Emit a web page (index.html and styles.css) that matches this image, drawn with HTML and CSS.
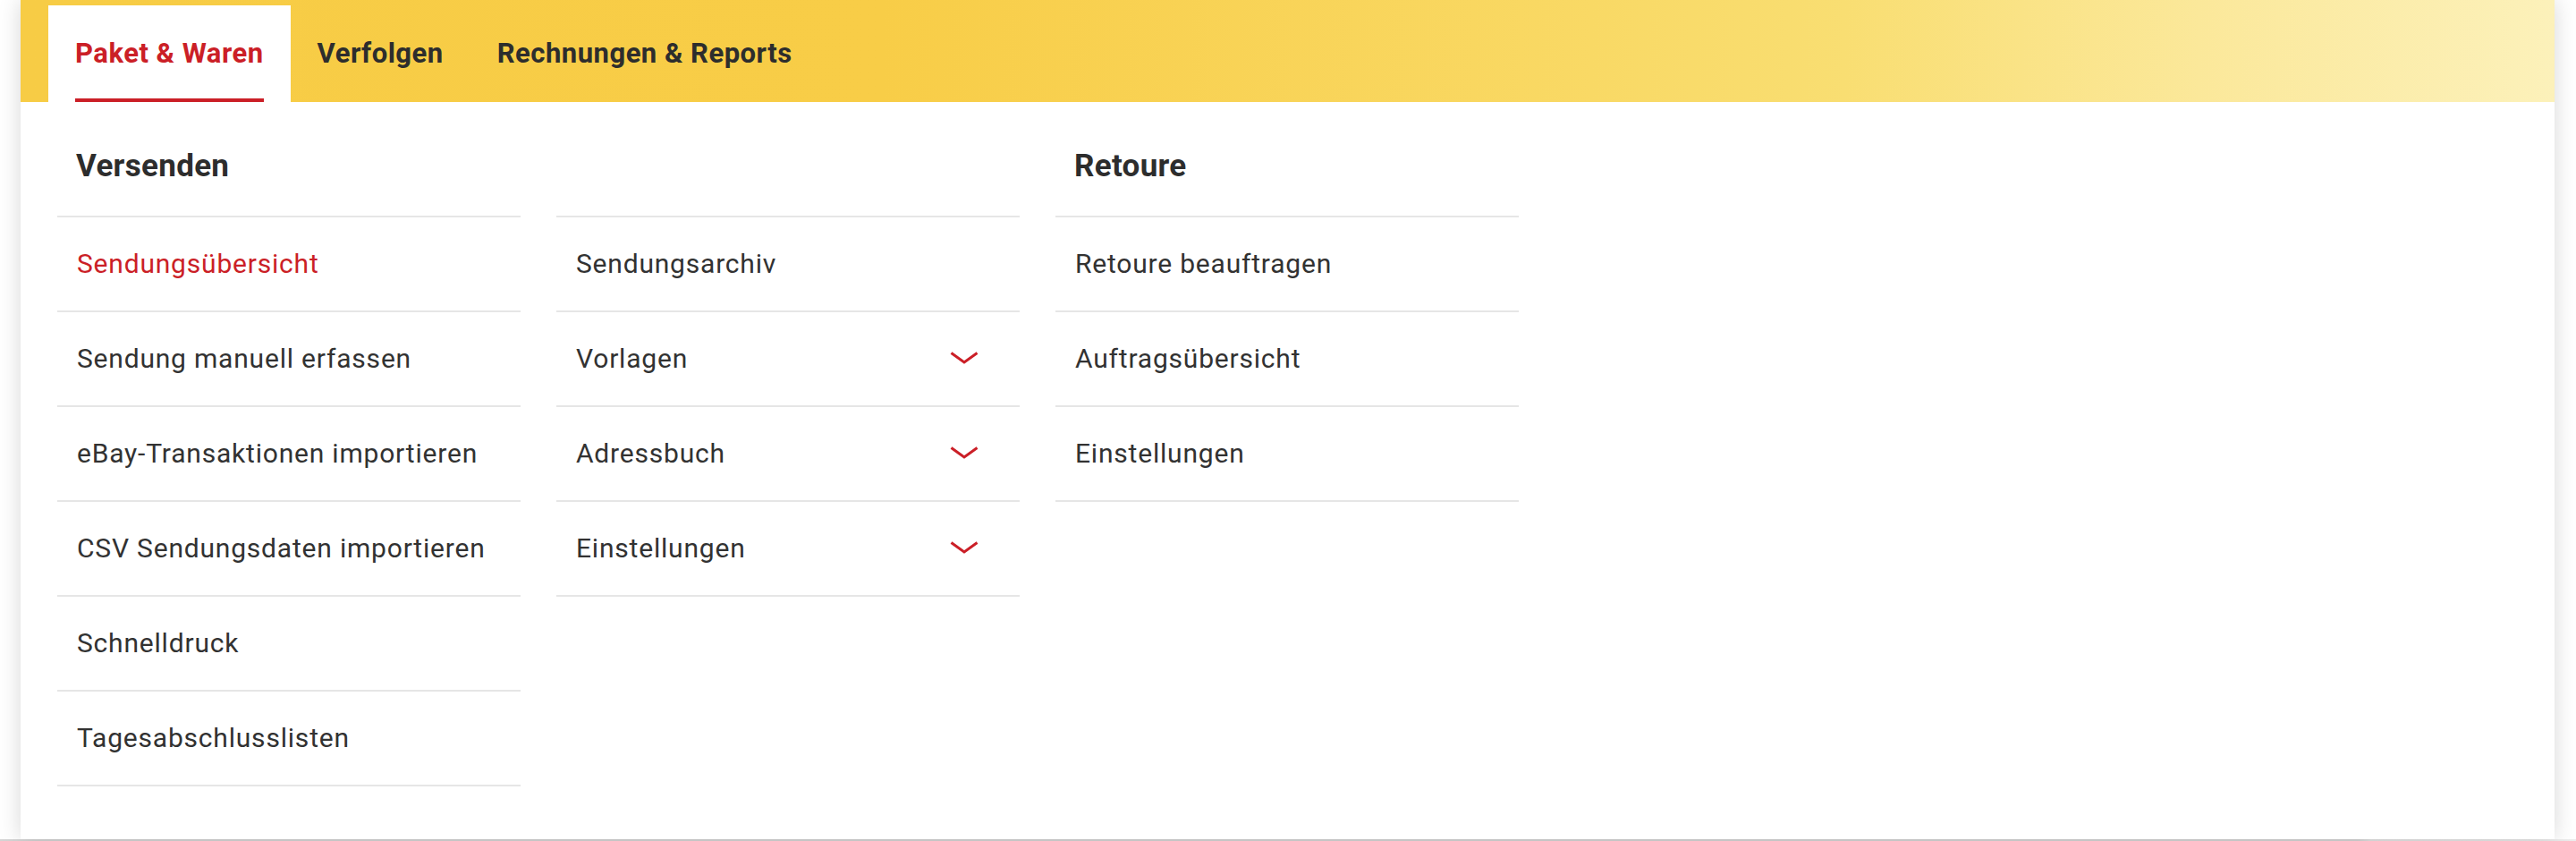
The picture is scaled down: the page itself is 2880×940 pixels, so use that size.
FILE: index.html
```html
<!DOCTYPE html>
<html lang="de">
<head>
<meta charset="utf-8">
<title>Paket &amp; Waren</title>
<link rel="stylesheet" href="styles.css">
</head>
<body>
<div class="page">
  <div class="menu">
    <nav class="tabs">
      <a class="tab active"><span class="tab-label">Paket &amp; Waren</span></a>
      <a class="tab"><span class="tab-label">Verfolgen</span></a>
      <a class="tab"><span class="tab-label">Rechnungen &amp; Reports</span></a>
    </nav>
    <div class="panel">
      <div class="col">
        <h2 class="col-head">Versenden</h2>
        <ul class="list">
          <li class="item current">Sendungsübersicht</li>
          <li class="item">Sendung manuell erfassen</li>
          <li class="item">eBay-Transaktionen importieren</li>
          <li class="item">CSV Sendungsdaten importieren</li>
          <li class="item">Schnelldruck</li>
          <li class="item">Tagesabschlusslisten</li>
        </ul>
      </div>
      <div class="col">
        <h2 class="col-head">&nbsp;</h2>
        <ul class="list">
          <li class="item">Sendungsarchiv</li>
          <li class="item">Vorlagen<svg class="chev" viewBox="0 0 32 14" width="32" height="14"><polyline points="1.5,1.5 16,12 30.5,1.5" fill="none" stroke="#cb1f27" stroke-width="3"/></svg></li>
          <li class="item">Adressbuch<svg class="chev" viewBox="0 0 32 14" width="32" height="14"><polyline points="1.5,1.5 16,12 30.5,1.5" fill="none" stroke="#cb1f27" stroke-width="3"/></svg></li>
          <li class="item">Einstellungen<svg class="chev" viewBox="0 0 32 14" width="32" height="14"><polyline points="1.5,1.5 16,12 30.5,1.5" fill="none" stroke="#cb1f27" stroke-width="3"/></svg></li>
        </ul>
      </div>
      <div class="col">
        <h2 class="col-head">Retoure</h2>
        <ul class="list">
          <li class="item">Retoure beauftragen</li>
          <li class="item">Auftragsübersicht</li>
          <li class="item">Einstellungen</li>
        </ul>
      </div>
    </div>
  </div>
  <div class="backdrop"></div>
</div>
</body>
</html>
```

FILE: styles.css
```css
* { box-sizing: border-box; }
html, body {
  margin: 0;
  padding: 0;
  background: #ffffff;
}
body {
  font-family: Roboto, "Noto Sans", "Liberation Sans", sans-serif;
  color: #323232;
  width: 2880px;
  height: 940px;
  overflow: hidden;
}
.page {
  display: flex;
  flex-direction: column;
  height: 940px;
}
.menu {
  margin: 0 24px 0 23px;
  height: 938px;
  background: #ffffff;
  box-shadow: 0 0 24px rgba(0, 0, 0, 0.16);
  display: flex;
  flex-direction: column;
  position: relative;
  z-index: 1;
}
.backdrop {
  height: 2px;
  background: linear-gradient(90deg, #d4d4d4 0%, #d4d4d4 91.5%, #e2e2e2 92%, #ececec 100%);
}
.tabs {
  height: 114px;
  flex: none;
  display: flex;
  align-items: flex-end;
  padding-left: 31px;
  background: linear-gradient(90deg, #f7cc45 0%, #f8cd47 34%, #f9d965 62%, #f9de72 72%, #fbe89a 86%, #fcf1ba 100%);
}
.tab {
  height: 108px;
  padding: 0 30px;
  display: flex;
  font-size: 31px;
  font-weight: 700;
  color: #2d2d2d;
  text-decoration: none;
  letter-spacing: 0.5px;
}
.tab-label {
  display: flex;
  align-items: center;
  height: 100%;
  padding-top: 2px;
  border-bottom: 4px solid transparent;
  white-space: nowrap;
}
.tab.active {
  background: #ffffff;
  color: #cb1f27;
}
.tab.active .tab-label {
  border-bottom-color: #cb1f27;
}
.panel {
  flex: 1;
  display: grid;
  grid-template-columns: 518px 518px 518px;
  column-gap: 40px;
  align-content: start;
  padding-left: 41px;
}
.col-head {
  margin: 0;
  padding: 51px 0 0 21px;
  height: 127px;
  font-size: 35px;
  line-height: 42px;
  font-weight: 700;
  letter-spacing: 0.3px;
  color: #2d2d2d;
}
.list {
  list-style: none;
  margin: 0;
  padding: 0;
  border-bottom: 2px solid #e6e6e6;
}
.item {
  height: 106px;
  border-top: 2px solid #e6e6e6;
  display: flex;
  align-items: center;
  justify-content: space-between;
  padding: 0 46px 0 22px;
  padding-bottom: 2px;
  font-size: 30px;
  letter-spacing: 0.8px;
  white-space: nowrap;
  color: #323232;
}
.item.current {
  color: #cb1f27;
}
.chev {
  flex: none;
  display: block;
}
```
